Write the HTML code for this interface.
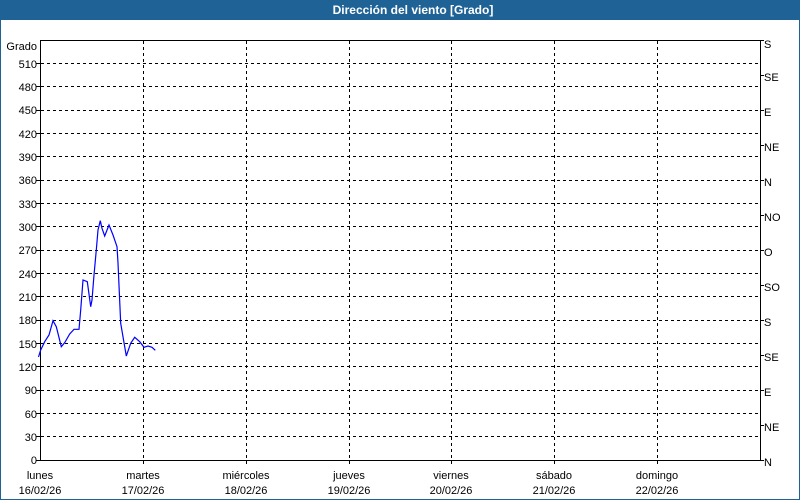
<!DOCTYPE html>
<html><head><meta charset="utf-8"><style>
html,body{margin:0;padding:0;background:#fff;}
svg{display:block;font-family:"Liberation Sans","DejaVu Sans",sans-serif;}
</style></head><body>
<svg width="800" height="500" viewBox="0 0 800 500" xmlns="http://www.w3.org/2000/svg">
<rect x="0" y="0" width="800" height="500" fill="#fff"/>
<rect x="0.5" y="0.5" width="799" height="499" fill="none" stroke="#1f6296"/>
<rect x="0" y="0" width="800" height="20" fill="#1f6296"/>
<text x="413" y="14" fill="#fff" font-size="12" font-weight="bold" text-anchor="middle">Dirección del viento [Grado]</text>
<g stroke="#000" stroke-width="1" stroke-dasharray="3,3" fill="none">
<path d="M41 436.5H760M41 413.5H760M41 390.5H760M41 366.5H760M41 343.5H760M41 320.5H760M41 296.5H760M41 273.5H760M41 250.5H760M41 226.5H760M41 203.5H760M41 180.5H760M41 156.5H760M41 133.5H760M41 110.5H760M41 86.5H760M41 63.5H760"/>
<path d="M143.5 41V465M246.5 41V465M349.5 41V465M451.5 41V465M554.5 41V465M657.5 41V465"/>
</g>
<g stroke="#000" stroke-width="1" fill="none">
<path d="M40.5 40V461M40 40.5H760.5M760.5 40V461M36 460.5H761"/>
<path d="M36 436.5H40M36 413.5H40M36 390.5H40M36 366.5H40M36 343.5H40M36 320.5H40M36 296.5H40M36 273.5H40M36 250.5H40M36 226.5H40M36 203.5H40M36 180.5H40M36 156.5H40M36 133.5H40M36 110.5H40M36 86.5H40M36 63.5H40"/>
<path d="M760 40.5H764M760 75.5H764M760 110.5H764M760 145.5H764M760 180.5H764M760 215.5H764M760 250.5H764M760 285.5H764M760 320.5H764M760 355.5H764M760 390.5H764M760 425.5H764M760 460.5H764"/>
</g>
<g font-size="11" fill="#000" text-anchor="end">
<text x="37" y="50">Grado</text>
<text x="37" y="68">510</text><text x="37" y="91">480</text><text x="37" y="114">450</text>
<text x="37" y="138">420</text><text x="37" y="161">390</text><text x="37" y="184">360</text>
<text x="37" y="208">330</text><text x="37" y="231">300</text><text x="37" y="254">270</text>
<text x="37" y="278">240</text><text x="37" y="301">210</text><text x="37" y="324">180</text>
<text x="37" y="348">150</text><text x="37" y="371">120</text><text x="37" y="394">90</text>
<text x="37" y="418">60</text><text x="37" y="441">30</text><text x="37" y="464">0</text>
</g>
<g font-size="11" fill="#000">
<text x="764" y="48">S</text><text x="764" y="81">SE</text><text x="764" y="116">E</text>
<text x="764" y="151">NE</text><text x="764" y="186">N</text><text x="764" y="221">NO</text>
<text x="764" y="256">O</text><text x="764" y="291">SO</text><text x="764" y="326">S</text>
<text x="764" y="361">SE</text><text x="764" y="396">E</text><text x="764" y="431">NE</text>
<text x="764" y="466">N</text>
</g>
<g font-size="11" fill="#000" text-anchor="middle">
<text x="40" y="479">lunes</text><text x="40" y="494">16/02/26</text>
<text x="143" y="479">martes</text><text x="143" y="494">17/02/26</text>
<text x="246" y="479">miércoles</text><text x="246" y="494">18/02/26</text>
<text x="349" y="479">jueves</text><text x="349" y="494">19/02/26</text>
<text x="451" y="479">viernes</text><text x="451" y="494">20/02/26</text>
<text x="554" y="479">sábado</text><text x="554" y="494">21/02/26</text>
<text x="657" y="479">domingo</text><text x="657" y="494">22/02/26</text>
</g>
<polyline fill="none" stroke="#0000ff" stroke-width="1.2" points="38.5,357 40.7,350 44.7,341.7 49,335 53,320.7 56.3,326.7 61.3,346.7 64.7,342.7 69.7,334 74,329.3 79,329.3 80.7,310 83,280 87.3,281.7 90.7,306.7 92,300 94,275 96.3,250 98,230 100.3,220.7 102,228.3 104.7,236 109,225 113,235 117,246.7 118,263 120.7,323.3 126.3,356 130.7,343.3 134.7,337.3 139.7,341.7 144,347.3 148,346 152,347.3 155.3,350.3"/>
</svg>
</body></html>
